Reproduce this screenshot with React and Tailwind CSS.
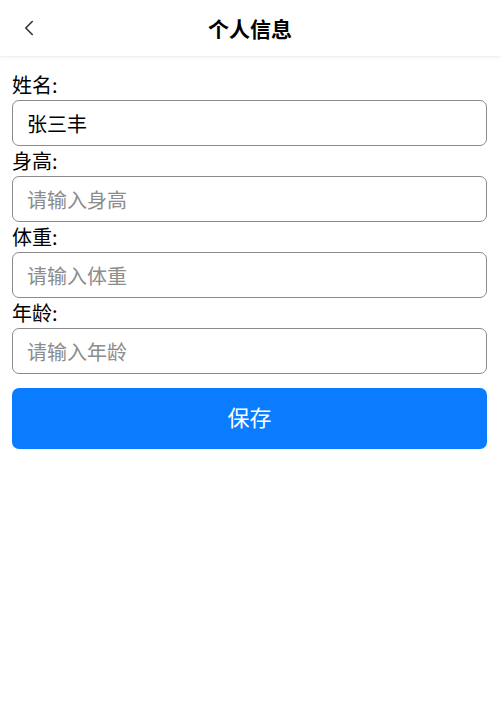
import { ChevronLeft } from "lucide-react"

const fields = [
  { label: "姓名:", value: "张三丰", placeholder: "请输入姓名" },
  { label: "身高:", value: "", placeholder: "请输入身高" },
  { label: "体重:", value: "", placeholder: "请输入体重" },
  { label: "年龄:", value: "", placeholder: "请输入年龄" },
]

export default function App() {
  return (
    <div
      className="min-h-[710px] w-[500px] bg-white text-black"
      style={{ fontFamily: '"Noto Sans CJK SC", "Noto Sans", sans-serif' }}
    >
      <header className="relative flex h-[57px] items-center justify-center border-b border-[#f0f0f0] shadow-[0_1px_3px_rgba(0,0,0,0.05)]">
        <button className="absolute left-[16px] top-1/2 -translate-y-1/2 text-[#333]">
          <ChevronLeft className="h-[26px] w-[26px]" strokeWidth={1.5} />
        </button>
        <h1 className="text-[21px] font-bold leading-none">个人信息</h1>
      </header>

      <main className="px-[12px] pt-[13px]">
        {fields.map((f) => (
          <div key={f.label}>
            <label className="block h-[30px] text-[20px] leading-[30px]">{f.label}</label>
            <input
              defaultValue={f.value}
              placeholder={f.placeholder}
              className="block h-[46px] w-[475px] rounded-[7px] border-[1.5px] border-[#8a8a8a] px-[14px] text-[20px] text-black outline-none placeholder:text-[#8c8c8c]"
            />
          </div>
        ))}
        <button className="mt-[14px] flex h-[61px] w-[475px] items-center justify-center rounded-[7px] bg-[#0a7cff] pb-[4px] text-[22px] text-white">
          保存
        </button>
      </main>
    </div>
  )
}
